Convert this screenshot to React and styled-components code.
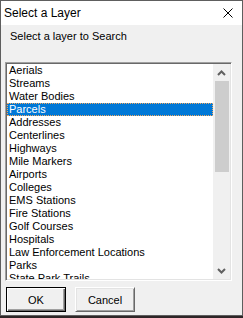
import React from "react";
import styled, { createGlobalStyle } from "styled-components";

const Global = createGlobalStyle`
  html, body { margin: 0; padding: 0; background: #2e2627; }
  body { font-family: "Liberation Sans", Arial, sans-serif; }
  * { box-sizing: border-box; }
`;

const Window = styled.div`
  width: 243px;
  height: 316px;
  border: 1px solid #5e5e5e;
  display: flex;
  flex-direction: column;
  background: #f0f0f0;
`;

const TitleBar = styled.div`
  height: 24px;
  background: #ffffff;
  display: flex;
  align-items: center;
  justify-content: space-between;
  padding: 0 9px 0 3px;
`;

const Title = styled.span`
  font-family: "Liberation Sans", Arial, sans-serif;
  font-size: 12px;
  color: #000;
  line-height: 16px;
`;

const Body = styled.div`
  flex: 1;
  display: flex;
  flex-direction: column;
  padding: 5px 4px 0 4px;
`;

const Label = styled.div`
  font-size: 11px;
  line-height: 13px;
  height: 13px;
  color: #000;
  padding-left: 5px;
  margin-bottom: 19px;
`;

const ListBox = styled.div`
  width: 227px;
  height: 219px;
  border: 1px solid;
  border-color: #a0a0a0 #ffffff #ffffff #a0a0a0;
  box-shadow: inset 1px 1px 0 #696969, inset -1px -1px 0 #e3e3e3;
  padding: 1px;
  display: flex;
  background: #fff;
`;

const Items = styled.div`
  flex: 1;
  overflow: hidden;
  background: #fff;
`;

const Item = styled.div`
  height: 13px;
  line-height: 13px;
  font-size: 11px;
  padding-left: 2px;
  white-space: nowrap;
  color: ${(p) => (p.$selected ? "#fff" : "#000")};
  background: ${(p) => (p.$selected ? "#0078d7" : "transparent")};
  outline: ${(p) => (p.$selected ? "1px dotted #f0a860" : "none")};
  outline-offset: -1px;
`;

const ScrollBar = styled.div`
  width: 17px;
  display: flex;
  flex-direction: column;
  background: #f0f0f0;
`;

const ArrowButton = styled.div`
  height: 17px;
  display: flex;
  align-items: center;
  justify-content: center;
`;

const Track = styled.div`
  flex: 1;
  padding: 0 1px 0 2px;
`;

const Thumb = styled.div`
  height: 91px;
  background: #cdcdcd;
`;

const ButtonRow = styled.div`
  display: flex;
  gap: 9px;
  margin-top: 6px;
  padding-left: 1px;
`;

const Button = styled.button`
  width: 60px;
  height: 25px;
  padding: 0;
  font-family: "Liberation Sans", Arial, sans-serif;
  font-size: 11px;
  color: #000;
  background: #f0f0f0;
  border: 1px solid;
  border-color: ${(p) =>
    p.$default ? "#000 #000 #000 #000" : "#ffffff #696969 #696969 #ffffff"};
  box-shadow: ${(p) =>
    p.$default
      ? "inset 1px 1px 0 #ffffff, inset -1px -1px 0 #696969, inset -2px -2px 0 #a0a0a0"
      : "inset 1px 1px 0 #e3e3e3, inset -1px -1px 0 #a0a0a0"};
`;

const Chevron = ({ up }) => (
  <svg width="9" height="6" viewBox="0 0 9 6">
    <polyline
      points={up ? "1,5 4.5,1.5 8,5" : "1,1 4.5,4.5 8,1"}
      fill="none"
      stroke="#606060"
      strokeWidth="2"
    />
  </svg>
);

const CloseIcon = () => (
  <svg width="10" height="10" viewBox="0 0 10 10">
    <path d="M0.5 0.5 L9.5 9.5 M9.5 0.5 L0.5 9.5" stroke="#000" strokeWidth="1" />
  </svg>
);

const layers = [
  "Aerials",
  "Streams",
  "Water Bodies",
  "Parcels",
  "Addresses",
  "Centerlines",
  "Highways",
  "Mile Markers",
  "Airports",
  "Colleges",
  "EMS Stations",
  "Fire Stations",
  "Golf Courses",
  "Hospitals",
  "Law Enforcement Locations",
  "Parks",
  "State Park Trails",
];

export default function App() {
  return (
    <>
      <Global />
      <Window>
        <TitleBar>
          <Title>Select a Layer</Title>
          <CloseIcon />
        </TitleBar>
        <Body>
          <Label>Select a layer to Search</Label>
          <ListBox>
            <Items>
              {layers.map((l) => (
                <Item key={l} $selected={l === "Parcels"}>
                  {l}
                </Item>
              ))}
            </Items>
            <ScrollBar>
              <ArrowButton>
                <Chevron up />
              </ArrowButton>
              <Track>
                <Thumb />
              </Track>
              <ArrowButton>
                <Chevron />
              </ArrowButton>
            </ScrollBar>
          </ListBox>
          <ButtonRow>
            <Button $default>OK</Button>
            <Button>Cancel</Button>
          </ButtonRow>
        </Body>
      </Window>
    </>
  );
}
